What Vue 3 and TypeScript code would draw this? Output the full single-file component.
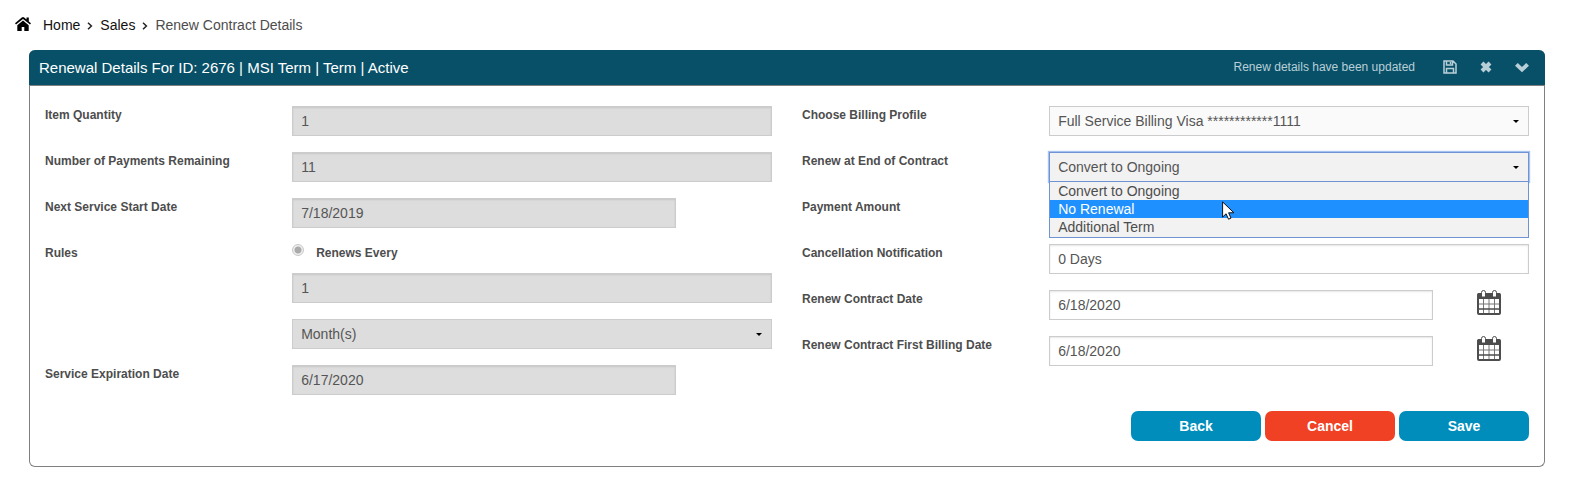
<script setup lang="ts">
import { ref } from 'vue'

const quantity = ref('1')
const remaining = ref('11')
const nextStart = ref('7/18/2019')
const every = ref('1')
const unit = ref('Month(s)')
const expiration = ref('6/17/2020')
const profile = ref('Full Service Billing Visa ************1111')
const renewal = ref('Convert to Ongoing')
const notice = ref('0 Days')
const payment = ref('')
const contractDate = ref('6/18/2020')
const billingDate = ref('6/18/2020')

const options: string[] = ['Convert to Ongoing', 'No Renewal', 'Additional Term']
const highlighted = ref(1)
</script>

<template>
  <div class="page">
    <nav class="crumbs" aria-label="Breadcrumb">
      <svg class="house" viewBox="0 0 16 14" aria-hidden="true">
        <path d="M8 3.6 2.3 8.200v5.300q0 .5.5.5h3.900V10h2.600v4h3.900q.5 0 .5-.5V8.200z" />
        <path d="M8 0Q7.300 0 6.800.4L0 6.300l1 1.200L8 1.900l7 5.600 1-1.200-2.200-1.900V.400h-2.300v2L9.200.4Q8.700 0 8 0z" />
      </svg>
      <a href="#">Home</a>
      <svg class="sep" viewBox="0 0 6 8" aria-hidden="true"><path d="M1 .8 4.400 4 1 7.200" /></svg>
      <a href="#">Sales</a>
      <svg class="sep" viewBox="0 0 6 8" aria-hidden="true"><path d="M1 .8 4.400 4 1 7.200" /></svg>
      <span class="current">Renew Contract Details</span>
    </nav>

    <section class="panel">
      <header class="bar">
        <h1>Renewal Details For ID: 2676 | MSI Term | Term | Active</h1>
        <span class="status">Renew details have been updated</span>
        <button class="tool" type="button" aria-label="Save">
          <svg viewBox="0 0 14 14" class="disk"><path d="M1 1h9l3 3v9H1zM3.500 1v4h6V1M3.500 13V8.500h7V13M7.500 2v2" /></svg>
        </button>
        <button class="tool" type="button" aria-label="Close">
          <svg viewBox="0 0 14 14" class="cross"><path d="M3 3l8 8M11 3l-8 8" /></svg>
        </button>
        <button class="tool" type="button" aria-label="Collapse">
          <svg viewBox="0 0 14 14" class="chev"><path d="M1.400 4.400 7 9.600l5.600-5.200" /></svg>
        </button>
      </header>

      <form class="body" @submit.prevent>
        <div class="columns">
          <div class="col">
            <div class="row">
              <label for="qty">Item Quantity</label>
              <input id="qty" v-model="quantity" class="field" type="text" disabled />
            </div>
            <div class="row">
              <label for="rem">Number of Payments Remaining</label>
              <input id="rem" v-model="remaining" class="field" type="text" disabled />
            </div>
            <div class="row">
              <label for="next">Next Service Start Date</label>
              <div class="dated"><input id="next" v-model="nextStart" class="field" type="text" disabled /></div>
            </div>
            <div class="row">
              <label for="every">Rules</label>
              <div class="rules">
                <div class="choice">
                  <input id="renews" type="radio" name="rule" checked disabled />
                  <label for="renews">Renews Every</label>
                </div>
                <input id="every" v-model="every" class="field" type="text" disabled />
                <div class="pick unit">
                  <select v-model="unit" class="field" aria-label="Period" disabled><option>Month(s)</option></select>
                </div>
              </div>
            </div>
            <div class="row">
              <label for="exp">Service Expiration Date</label>
              <div class="dated"><input id="exp" v-model="expiration" class="field" type="text" disabled /></div>
            </div>
          </div>

          <div class="col">
            <div class="row">
              <label for="profile">Choose Billing Profile</label>
              <div class="pick">
                <select id="profile" v-model="profile" class="field"><option>{{ profile }}</option></select>
              </div>
            </div>
            <div class="row">
              <label for="renewal">Renew at End of Contract</label>
              <div class="pick open">
                <select id="renewal" v-model="renewal" class="field">
                  <option v-for="o in options" :key="o">{{ o }}</option>
                </select>
                <ul class="menu" role="listbox" aria-label="Renew at End of Contract">
                  <li
                    v-for="(o, i) in options"
                    :key="o"
                    role="option"
                    :aria-selected="o === renewal"
                    :class="{ on: i === highlighted }"
                    @mouseenter="highlighted = i"
                    @click="renewal = o"
                  >{{ o }}</li>
                </ul>
                <svg class="pointer" viewBox="0 0 12 19" aria-hidden="true">
                  <path d="M.6.900v15.200l3.500-3.300 2.400 5.400 2.500-1.100-2.400-5.300h5.300z" />
                </svg>
              </div>
            </div>
            <div class="row">
              <label for="pay">Payment Amount</label>
              <input id="pay" v-model="payment" class="field" type="text" />
            </div>
            <div class="row">
              <label for="notice">Cancellation Notification</label>
              <input id="notice" v-model="notice" class="field" type="text" />
            </div>
            <div class="row">
              <label for="cdate">Renew Contract Date</label>
              <div class="dated">
                <input id="cdate" v-model="contractDate" class="field" type="text" />
                <button class="cal" type="button" aria-label="Choose renew contract date">
                  <svg viewBox="0 0 24 26"><path class="top" d="M2 3h20q1.500 0 1.500 1.500V9H.5V4.500Q.5 3 2 3z" /><path class="thin" d="M6.500 9v15M12 9v15M17.500 9v15M1 14h22" /><path class="thick" d="M1 19h22" /><rect class="frame" x="1" y="4" width="22" height="20" rx="1" /><path class="ring" d="M4.500 7V2.500a2 2 0 0 1 4 0V7zM15.500 7V2.500a2 2 0 0 1 4 0V7z" /></svg>
                </button>
              </div>
            </div>
            <div class="row">
              <label for="bdate">Renew Contract First Billing Date</label>
              <div class="dated">
                <input id="bdate" v-model="billingDate" class="field" type="text" />
                <button class="cal" type="button" aria-label="Choose first billing date">
                  <svg viewBox="0 0 24 26"><path class="top" d="M2 3h20q1.500 0 1.500 1.500V9H.5V4.500Q.5 3 2 3z" /><path class="thin" d="M6.500 9v15M12 9v15M17.500 9v15M1 14h22" /><path class="thick" d="M1 19h22" /><rect class="frame" x="1" y="4" width="22" height="20" rx="1" /><path class="ring" d="M4.500 7V2.500a2 2 0 0 1 4 0V7zM15.500 7V2.500a2 2 0 0 1 4 0V7z" /></svg>
                </button>
              </div>
            </div>
          </div>
        </div>

        <div class="actions">
          <button type="button">Back</button>
          <button type="button" class="danger">Cancel</button>
          <button type="submit">Save</button>
        </div>
      </form>
    </section>
  </div>
</template>

<style>
body {
  margin: 0;
  background: #fff;
}
</style>

<style scoped>
.page,
.page * {
  box-sizing: border-box;
}
.page {
  font-family: "Liberation Sans", Arial, sans-serif;
  font-size: 14px;
  color: #4d4d4d;
  padding: 16px 27px 20px 15px;
}
.crumbs {
  display: flex;
  align-items: center;
  height: 18px;
}
.crumbs a {
  color: #111;
  text-decoration: none;
}
.house {
  width: 16px;
  height: 14px;
  margin: 0 12px 2px 0;
  fill: #000;
}
.sep {
  width: 6px;
  height: 8px;
  margin: 1px 7px 0;
  fill: none;
  stroke: #222;
  stroke-width: 1.5;
}
.panel {
  margin: 16px 0 0 14px;
  border: 1px solid #808080;
  border-top: 0;
  border-radius: 6px;
}
.bar {
  display: flex;
  align-items: center;
  height: 36px;
  margin: 0 -1px;
  padding: 0 16px 2px 10px;
  border-bottom: 1px solid #808080;
  border-radius: 6px 6px 0 0;
  background: #085068;
  color: #fff;
}
h1 {
  flex: 1;
  margin: 0;
  padding-top: 2px;
  font-size: 15px;
  font-weight: 400;
}
.status {
  margin-right: 28px;
  font-size: 12px;
  color: #b9cfd7;
}
.tool {
  width: 14px;
  height: 14px;
  margin-left: 22px;
  padding: 0;
  border: 0;
  background: none;
}
.status + .tool {
  margin-left: 0;
}
.tool svg {
  display: block;
  width: 14px;
  height: 14px;
  fill: none;
  stroke: #b9cfd7;
}
.tool .disk {
  stroke-width: 1.5;
}
.cross,
.chev {
  stroke-width: 4;
}
.body {
  padding: 20px 15px 25px;
}
.columns {
  display: grid;
  grid-template-columns: 1fr 1fr;
  gap: 30px;
}
.col {
  display: flex;
  flex-direction: column;
  gap: 16px;
}
.row {
  display: grid;
  grid-template-columns: 34% 66%;
  align-items: start;
}
label {
  font-size: 12px;
  line-height: 18px;
  font-weight: 700;
}
.field {
  display: block;
  width: 100%;
  height: 30px;
  margin: 0;
  padding: 0 8px;
  border: 1px solid #ccc;
  border-radius: 0;
  background: #fff;
  box-shadow: inset 0 1px 2px rgba(0, 0, 0, 0.1);
  color: #555;
  font: inherit;
  opacity: 1;
}
.field:disabled {
  background: #ddd;
}
.dated {
  display: flex;
  justify-content: space-between;
}
.dated .field {
  width: 80%;
}
.cal {
  width: 24px;
  height: 26px;
  margin-right: 28px;
  padding: 0;
  border: 0;
  background: none;
}
.cal svg {
  display: block;
  width: 24px;
  height: 26px;
  fill: none;
}
.cal .top {
  fill: #4d4d4d;
}
.cal .thin {
  stroke: #777;
}
.cal .thick {
  stroke: #4d4d4d;
  stroke-width: 1.5;
}
.cal .frame {
  stroke: #4d4d4d;
  stroke-width: 2;
}
.cal .ring {
  fill: #fff;
  stroke: #4d4d4d;
}
.choice {
  display: flex;
  align-items: flex-start;
  height: 17px;
  margin-bottom: 12px;
}
.choice input {
  width: 12px;
  height: 12px;
  margin: 0 12px 0 0;
  appearance: none;
  border: 1px solid #c8c8c8;
  border-radius: 50%;
  background: radial-gradient(circle, #aaa 0 3px, #eee 4px);
}
.unit {
  margin-top: 16px;
}
.pick {
  position: relative;
}
.pick .field {
  appearance: none;
  background: #fafafa;
  box-shadow: none;
}
.pick .field:disabled {
  background: #ddd;
}
.pick::after {
  content: "";
  position: absolute;
  top: 14px;
  right: 10px;
  border: 3px solid transparent;
  border-top-color: #000;
  border-bottom: 0;
}
.open .field {
  background: #f2f2f2;
  border-color: #7093d6;
  box-shadow: 0 0 1px 1px #a6c3f0;
}
.menu {
  position: absolute;
  z-index: 2;
  top: calc(100% - 1px);
  left: 0;
  right: 0;
  margin: 0;
  padding: 0 0 1px;
  list-style: none;
  border: 1px solid #7093d6;
  background: #f2f2f2;
}
.menu li {
  padding: 0 8px;
  line-height: 18px;
}
.menu .on {
  background: #1e90ff;
  color: #fff;
}
.pointer {
  position: absolute;
  z-index: 3;
  top: 49px;
  left: 36%;
  width: 12px;
  height: 19px;
  fill: #fff;
  stroke: #111;
}
.actions {
  display: flex;
  justify-content: flex-end;
  gap: 4px;
  margin-top: 16px;
}
.actions button {
  width: 130px;
  height: 30px;
  padding: 0;
  border: 0;
  border-radius: 7px;
  background: #008dbc;
  color: #fff;
  font: 700 14px "Liberation Sans", Arial, sans-serif;
}
.actions .danger {
  background: #f04124;
}
</style>
